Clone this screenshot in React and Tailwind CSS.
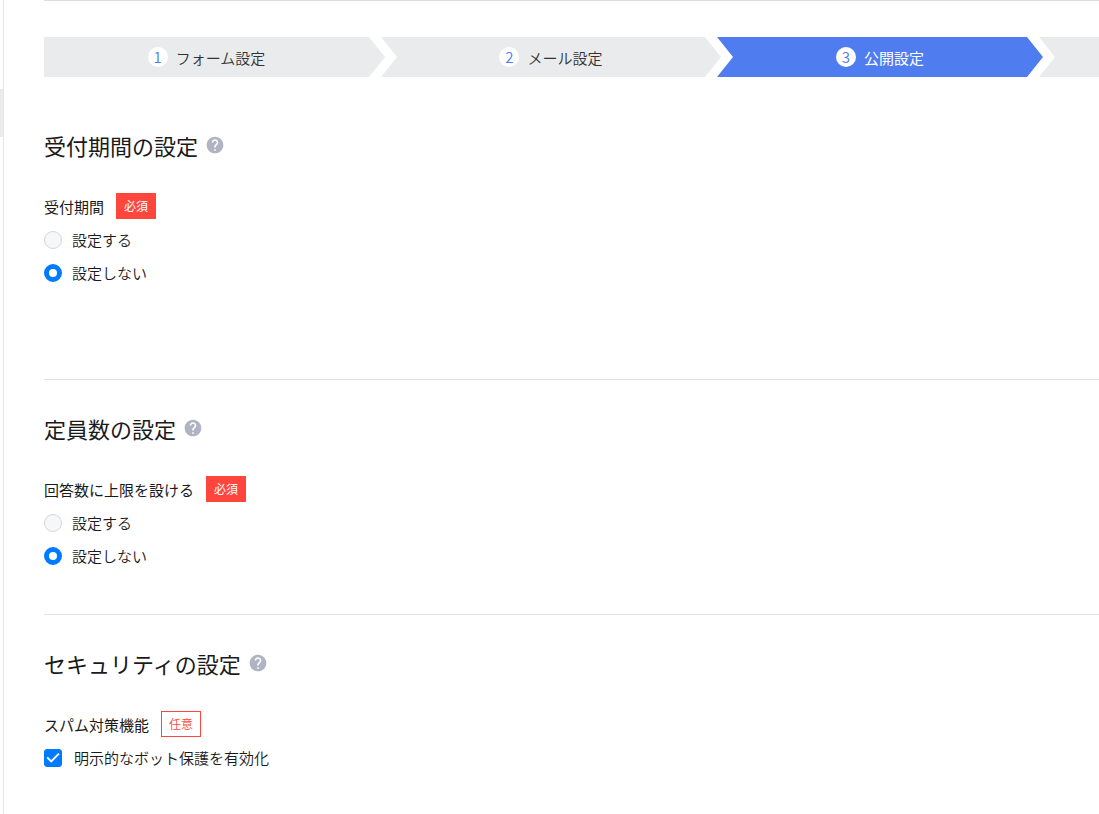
import { useState } from "react";
import { MdHelp } from "react-icons/md";

const steps = ["フォーム設定", "メール設定", "公開設定"];

const firstShape =
  "[clip-path:polygon(0_0,calc(100%-16px)_0,100%_50%,calc(100%-16px)_100%,0_100%)]";
const arrowShape =
  "pl-4 [clip-path:polygon(0_0,calc(100%-16px)_0,100%_50%,calc(100%-16px)_100%,0_100%,16px_50%)]";

function Stepper() {
  const [current, setCurrent] = useState(2);

  return (
    <ol className="grid grid-cols-[337fr_336fr_322fr_60fr] h-10">
      {steps.map((step, index) => (
        <li key={step}>
          <button
            type="button"
            onClick={() => setCurrent(index)}
            className={`flex h-10 w-[calc(100%+4px)] items-center justify-center gap-2 pr-4 text-[15px] ${
              index === 0 ? firstShape : arrowShape
            } ${
              index === current
                ? "bg-[#4f7def] text-white"
                : "bg-[#eaebed] font-[350] text-[#333333]"
            }`}
          >
            <span className="flex h-5 w-5 items-center justify-center rounded-full bg-white font-[350] text-[#4f7def]">
              {index + 1}
            </span>
            <span className="pt-0.5">{step}</span>
          </button>
        </li>
      ))}
      {/* last step runs off the right edge */}
      <li className="bg-[#eaebed] [clip-path:polygon(0_0,100%_0,100%_100%,0_100%,16px_50%)]"></li>
    </ol>
  );
}

function SectionTitle({ children }) {
  return (
    <div className="flex items-center gap-[7px]">
      <h2 className="text-[22px] leading-8 text-[#1a1a1a]">{children}</h2>
      <button type="button" aria-label="ヘルプ" className="text-[#b0b3c1]">
        <MdHelp className="h-5 w-5" />
      </button>
    </div>
  );
}

function Badge({ required }) {
  return (
    <span
      className={`flex h-[26px] w-10 items-center justify-center border border-[#ff463c] text-[12px] ${
        required ? "bg-[#ff463c] text-white" : "font-[350] text-[#ff463c]"
      }`}
    >
      {required ? "必須" : "任意"}
    </span>
  );
}

function FieldLegend({ children, required }) {
  return (
    <legend className="mb-1 flex items-center gap-3 text-[15px] text-[#1a1a1a]">
      <span className="pt-0.5">{children}</span>
      <Badge required={required} />
    </legend>
  );
}

function RadioSetting({ title, label, name, className }) {
  const [enabled, setEnabled] = useState(false);

  const options = [
    { text: "設定する", value: true },
    { text: "設定しない", value: false },
  ];

  return (
    <section className={`border-b border-[#e2e2e4] pt-8 ${className}`}>
      <SectionTitle>{title}</SectionTitle>
      <fieldset className="mt-8">
        <FieldLegend required>{label}</FieldLegend>
        {options.map((option) => (
          <label
            key={option.text}
            className="mt-px flex h-8 w-fit items-center gap-[10px] text-[15px] leading-6 font-[350] text-[#1a1a1a]"
          >
            <input
              type="radio"
              name={name}
              checked={enabled === option.value}
              onChange={() => setEnabled(option.value)}
              className="h-[18px] w-[18px] appearance-none rounded-full border border-[#d6d6d6] bg-[#f6f7f9] checked:border-[5px] checked:border-[#007bff] checked:bg-white"
            />
            {option.text}
          </label>
        ))}
      </fieldset>
    </section>
  );
}

function SecuritySetting() {
  const [protect, setProtect] = useState(true);

  return (
    <section className="pt-8">
      <SectionTitle>セキュリティの設定</SectionTitle>
      <fieldset className="mt-8">
        <FieldLegend>スパム対策機能</FieldLegend>
        <label className="mt-px flex h-8 w-fit items-center gap-3 text-[15px] leading-6 font-[350] text-[#1a1a1a]">
          <span className="grid h-[18px] w-[18px]">
            <input
              type="checkbox"
              checked={protect}
              onChange={(e) => setProtect(e.target.checked)}
              className="col-start-1 row-start-1 h-[18px] w-[18px] appearance-none rounded-[3px] border border-[#d6d6d6] bg-[#f6f7f9] checked:border-[#007bff] checked:bg-[#007bff]"
            />
            {protect && (
              <svg
                className="pointer-events-none col-start-1 row-start-1 h-[18px] w-[18px]"
                viewBox="0 0 18 18"
                fill="none"
                stroke="white"
              >
                <path strokeWidth={2} d="M3.2 8.4l4 4L15 4.6" />
              </svg>
            )}
          </span>
          明示的なボット保護を有効化
        </label>
      </fieldset>
    </section>
  );
}

export default function App() {
  return (
    <div className="flex min-h-screen bg-white font-['Noto_Sans_CJK_JP',sans-serif]">
      <aside className="w-1 shrink-0 border-r border-[#e6e6e8] pt-[89px]">
        <div className="h-12 bg-[#eaebed]"></div>
      </aside>
      <main className="min-w-0 flex-1 pl-10">
        <div className="mb-5 border-t border-[#dddddd] pt-9">
          <Stepper />
        </div>
        <RadioSetting
          title="受付期間の設定"
          label="受付期間"
          name="period"
          className="pb-[90px]"
        />
        <RadioSetting
          title="定員数の設定"
          label="回答数に上限を設ける"
          name="capacity"
          className="pb-[42px]"
        />
        <SecuritySetting />
      </main>
    </div>
  );
}
